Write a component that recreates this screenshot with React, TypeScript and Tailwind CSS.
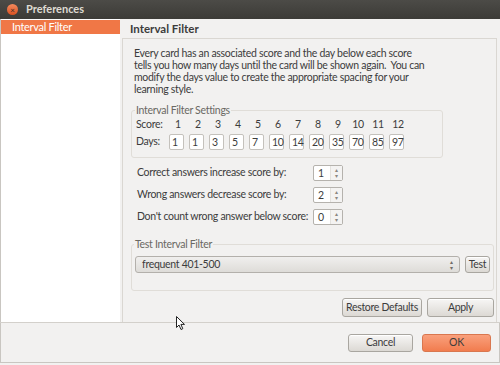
import React from "react";

const btn =
  "flex items-center justify-center whitespace-nowrap rounded-[3px] border border-[#a9a6a0] bg-gradient-to-b from-[#f7f6f5] to-[#dcd9d4] text-[#3c3c3c] shadow-[inset_0_1px_0_#ffffff]";

function Spin({ v }: { v: string }) {
  return (
    <div className="flex h-[16px] w-[30px] rounded-[2px] border border-[#b5b2ad] bg-white">
      <div className="flex-1 pl-[4px] leading-[14px] text-[#3c3c3c]">{v}</div>
      <div className="flex w-[12px] flex-col items-center justify-center border-l border-[#e4e2de] bg-[#f4f3f2] text-[6px] leading-[6px] text-[#8a8782]">
        <span>▴</span>
        <span>▾</span>
      </div>
    </div>
  );
}

export default function App() {
  const scores = ["1", "2", "3", "4", "5", "6", "7", "8", "9", "10", "11", "12"];
  const days = ["1", "1", "3", "5", "7", "10", "14", "20", "35", "70", "85", "97"];
  return (
    <div className="relative h-[365px] w-[500px] overflow-hidden bg-[#f2f1f0] font-['Lato',sans-serif] text-[10.5px] tracking-[-0.3px] text-[#3c3c3c]">
      {/* title bar */}
      <div className="flex h-[19px] items-center bg-gradient-to-b from-[#4c4b47] to-[#3c3b37] pl-[7px]">
        <div className="flex h-[11px] w-[11px] items-center justify-center rounded-full bg-gradient-to-b from-[#f48a5c] to-[#d9501f] text-[8px] leading-none text-[#3a2a20]">
          ×
        </div>
        <div className="ml-[8px] text-[11px] font-bold tracking-[0px] text-[#dfdbd2]">Preferences</div>
      </div>

      <div className="flex h-[304px] border-b border-[#d3d0cb]">
        {/* left list */}
        <div className="w-[120px] border-l border-[#c9c6c1] bg-white">
          <div className="mt-[1px] flex h-[14px] items-center bg-[#f07746] pl-[11px] text-[11px] text-white">
            Interval Filter
          </div>
        </div>

        {/* right */}
        <div className="flex flex-1 flex-col pl-[2px] pr-[3px]">
          <div className="flex h-[19px] items-center pl-[8px] text-[11.5px] font-bold tracking-[0px] text-[#3c3c3c]">
            Interval Filter
          </div>
          <div className="flex flex-1 flex-col border-l border-r border-t border-[#dad7d2] pl-[8px] pr-[2px] pt-[8px]">
            <p className="whitespace-pre pl-[3px] leading-[12px]">
              {"Every card has an associated score and the day below each score\n"}
              {"tells you how many days until the card will be shown again.  You can\n"}
              {"modify the days value to create the appropriate spacing for your\n"}
              {"learning style."}
            </p>

            {/* settings group */}
            <div className="relative mt-[15px] w-[312px] rounded-[3px] border border-[#e0ddd8] pb-[7px] pl-[4px] pt-[6px]">
              <div className="absolute left-[3px] top-[-8px] bg-[#f2f1f0] px-[1px] text-[#6a6863]">
                Interval Filter Settings
              </div>
              <div className="flex h-[16px] items-center">
                <div className="w-[32px]">Score:</div>
                {scores.map((s) => (
                  <div key={s} className="w-[20px] text-center">
                    {s}
                  </div>
                ))}
              </div>
              <div className="mt-[1px] flex items-center">
                <div className="w-[33px]">Days:</div>
                <div className="flex gap-[5px]">
                  {days.map((d, i) => (
                    <div
                      key={i}
                      className="h-[16px] w-[15px] rounded-[2px] border border-[#c4c1bc] bg-white pl-[2px] leading-[14px]"
                    >
                      {d}
                    </div>
                  ))}
                </div>
              </div>
            </div>

            {/* spin rows */}
            <div className="mt-[7px] flex flex-col gap-[6px] pl-[6px]">
              <div className="flex items-center">
                <div className="w-[176px]">Correct answers increase score by:</div>
                <Spin v="1" />
              </div>
              <div className="flex items-center">
                <div className="w-[176px]">Wrong answers decrease score by:</div>
                <Spin v="2" />
              </div>
              <div className="flex items-center">
                <div className="w-[176px] whitespace-nowrap">Don't count wrong answer below score:</div>
                <Spin v="0" />
              </div>
            </div>

            {/* test group */}
            <div className="relative mt-[19px] h-[47px] rounded-[3px] border border-[#e0ddd8] px-[3px] pt-[11px]">
              <div className="absolute left-[2px] top-[-8px] bg-[#f2f1f0] px-[1px] text-[#6a6863]">
                Test Interval Filter
              </div>
              <div className="flex gap-[5px]">
                <div className="flex h-[17px] flex-1 items-center justify-between rounded-[3px] border border-[#b3b0ab] bg-gradient-to-b from-[#f0efee] to-[#dedcd8] pl-[6px] pr-[6px]">
                  <span>frequent 401-500</span>
                  <span className="flex flex-col text-[6px] leading-[6px] text-[#6f6c67]">
                    <span>▴</span>
                    <span>▾</span>
                  </span>
                </div>
                <div className={`${btn} h-[17px] w-[25px]`}>Test</div>
              </div>
            </div>

            <div className="mt-[7px] flex justify-end gap-[5px]">
              <div className={`${btn} h-[19px] w-[80px]`}>Restore Defaults</div>
              <div className={`${btn} h-[19px] w-[67px]`}>Apply</div>
            </div>
          </div>
        </div>
      </div>

      {/* bottom buttons */}
      <div className="flex h-[40px] items-center justify-end gap-[9px] border-b border-l border-r border-[#c9c6c1] pr-[8px]">
        <div className={`${btn} h-[18px] w-[65px]`}>Cancel</div>
        <div className="flex h-[18px] w-[69px] items-center justify-center rounded-[3px] border border-[#d9774f] bg-gradient-to-b from-[#f9a07c] to-[#f17c4e] text-[#3c3c3c]">
          OK
        </div>
      </div>

      {/* mouse pointer */}
      <svg className="absolute left-[176px] top-[316px]" width="10" height="15" viewBox="0 0 10 15">
        <path d="M0.5 0.5 L0.5 11.5 L3 9 L5 13.5 L6.8 12.7 L4.9 8.4 L8.5 8.4 Z" fill="#ffffff" stroke="#222222" strokeWidth="1" />
      </svg>
    </div>
  );
}
